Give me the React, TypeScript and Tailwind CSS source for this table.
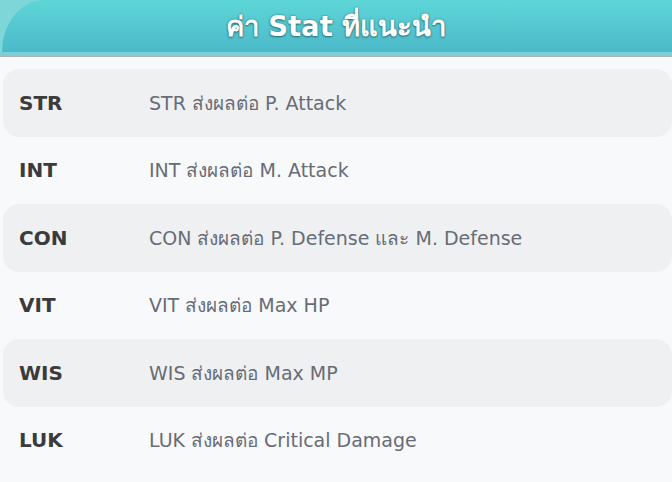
const stats = [
  { key: 'STR', desc: 'STR ส่งผลต่อ P. Attack' },
  { key: 'INT', desc: 'INT ส่งผลต่อ M. Attack' },
  { key: 'CON', desc: 'CON ส่งผลต่อ P. Defense และ M. Defense' },
  { key: 'VIT', desc: 'VIT ส่งผลต่อ Max HP' },
  { key: 'WIS', desc: 'WIS ส่งผลต่อ Max MP' },
  { key: 'LUK', desc: 'LUK ส่งผลต่อ Critical Damage' },
];

export default function App() {
  return (
    <div className="w-[672px] h-[482px] overflow-hidden bg-[#f8f9fb] font-['DejaVu_Sans',sans-serif]">
      {/* header bar */}
      <div className="relative h-[57px] overflow-hidden border-b border-[#aab4b8] bg-[#7fd6d9]">
        <div className="absolute left-[2px] right-0 top-0 h-[52px] rounded-tl-[42px_52px] bg-gradient-to-b from-[#5ed6d7] to-[#4bb9c9]" />
        <div className="absolute inset-x-0 top-[52px] h-[4px] bg-[#7ccfd9]" />
        <div className="absolute inset-x-0 top-0 h-[52px] flex items-center justify-center pt-[2px]">
          <h1 className="text-[27.5px] font-bold text-white [text-shadow:0_0_2px_#2b6f78,0_1px_2px_#2b6f78]">
            ค่า Stat ที่แนะนำ
          </h1>
        </div>
      </div>

      {/* stat rows */}
      <div className="mt-[12px] ml-[3px] w-[669px]">
        {stats.map((s, i) => (
          <div
            key={s.key}
            className={`h-[67.5px] flex items-center rounded-[16px] ${i % 2 === 0 ? 'bg-[#eff0f2]' : ''}`}
          >
            <span className="w-[146px] pl-[16px] text-[20px] font-bold text-[#3b3b3b]">{s.key}</span>
            <span className="text-[19px] text-[#676c75]">{s.desc}</span>
          </div>
        ))}
      </div>
    </div>
  );
}
